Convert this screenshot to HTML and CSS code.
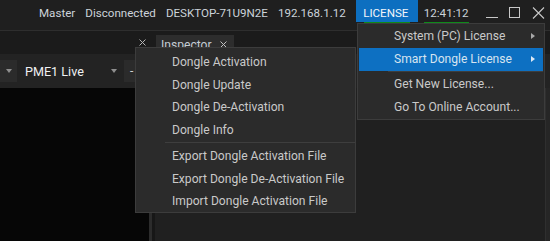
FILE: index.html
```html
<!DOCTYPE html>
<html lang="en">
<head>
    <meta charset="UTF-8">
    <title>License Menu</title>
    <link rel="stylesheet" href="styles.css">
</head>
<body>
    <div class="window">
        <header class="titlebar">
            <span class="status">Master</span>
            <span class="status">Disconnected</span>
            <span class="status">DESKTOP-71U9N2E</span>
            <span class="status">192.168.1.12</span>
            <span class="license">LICENSE</span>
            <span class="clock">12:41:12</span>
            <div class="win-controls">
                <svg class="win-btn" width="12" height="12" viewBox="0 0 12 12"><line x1="0" y1="10.5" x2="12" y2="10.5" stroke="#c8c8c8" stroke-width="1"/></svg>
                <svg class="win-btn" width="12" height="12" viewBox="0 0 12 12"><rect x="0.5" y="0.5" width="10" height="10" fill="none" stroke="#c8c8c8" stroke-width="1"/></svg>
                <svg class="win-btn" width="13" height="12" viewBox="0 0 13 12"><path d="M1 0.5 L12 11.5 M12 0.5 L1 11.5" stroke="#c8c8c8" stroke-width="1.1"/></svg>
            </div>
        </header>

        <div class="tabstrip">
            <svg class="tab-close" width="7" height="7" viewBox="0 0 7 7"><path d="M0.5 0.5 L6.5 6.5 M6.5 0.5 L0.5 6.5" stroke="#b4b4b4" stroke-width="1"/></svg>
            <div class="tab">
                <span>Inspector</span>
                <svg width="7" height="7" viewBox="0 0 7 7"><path d="M0.5 0.5 L6.5 6.5 M6.5 0.5 L0.5 6.5" stroke="#c0c0c0" stroke-width="1"/></svg>
            </div>
        </div>

        <div class="toolbar">
            <div class="drop drop-small"><span class="caret"></span></div>
            <div class="drop drop-scene">
                <span>PME1 Live</span>
                <span class="caret"></span>
            </div>
            <div class="drop drop-minus">-</div>
        </div>

        <div class="workspace">
            <div class="left-pane"></div>
            <div class="splitter"></div>
            <div class="right-pane"></div>
            <div class="edge"></div>
        </div>
    </div>

    <!-- LICENSE dropdown -->
    <div class="menu menu-license">
        <div class="menu-item has-sub">System (PC) License<span class="sub-arrow"></span></div>
        <div class="menu-item has-sub active">Smart Dongle License<span class="sub-arrow"></span></div>
        <div class="menu-sep"></div>
        <div class="menu-item">Get New License...</div>
        <div class="menu-item">Go To Online Account...</div>
    </div>

    <!-- Smart Dongle submenu -->
    <div class="menu menu-dongle">
        <div class="menu-item">Dongle Activation</div>
        <div class="menu-item">Dongle Update</div>
        <div class="menu-item">Dongle De-Activation</div>
        <div class="menu-item">Dongle Info</div>
        <div class="menu-sep"></div>
        <div class="menu-item">Export Dongle Activation File</div>
        <div class="menu-item">Export Dongle De-Activation File</div>
        <div class="menu-item">Import Dongle Activation File</div>
    </div>
</body>
</html>
```

FILE: styles.css
```css
* {
    margin: 0;
    padding: 0;
    box-sizing: border-box;
}

body {
    font-family: Roboto, 'Noto Sans', sans-serif;
    font-size: 12.1px;
    background: #202020;
    width: 550px;
    height: 241px;
    overflow: hidden;
    position: relative;
}

.window {
    display: flex;
    flex-direction: column;
    height: 241px;
}

/* Title bar */
.titlebar {
    height: 31px;
    background: #1f1f1f;
    border-bottom: 1px solid #2e2e2e;
    display: flex;
    align-items: flex-start;
    padding-left: 39px;
    color: #ccd3da;
    font-size: 11.6px;
    white-space: nowrap;
}

.status {
    margin-right: 10px;
    line-height: 26px;
}

.license {
    width: 62px;
    height: 22px;
    line-height: 26px;
    background: #0d6fc0;
    color: #f2f6fa;
    text-align: center;
    position: relative;
    margin-right: 6px;
    padding-right: 2px;
}

.license::after {
    content: "";
    position: absolute;
    left: 8px;
    top: 22px;
    width: 46px;
    height: 2px;
    background: #0f8a1a;
}

.clock {
    line-height: 26px;
    position: relative;
}

.clock::after {
    content: "";
    position: absolute;
    left: 0;
    top: 22px;
    width: 45px;
    height: 2px;
    background: #0f8a1a;
}

.win-controls {
    display: flex;
    gap: 11px;
    margin-left: auto;
    margin-right: 5px;
    padding-top: 7px;
}

/* Tab strip */
.tabstrip {
    height: 23px;
    background: #1b1b1b;
    display: flex;
    align-items: flex-end;
    padding-left: 139px;
}

.tab-close {
    margin-bottom: 8px;
    margin-right: 10px;
}

.tab {
    height: 19px;
    width: 78px;
    background: #2d2d2d;
    color: #c4ccd4;
    display: flex;
    align-items: center;
    padding-left: 5px;
    gap: 8px;
}

/* Toolbar */
.toolbar {
    height: 34px;
    background: #232323;
    display: flex;
    align-items: center;
}

.drop {
    height: 22px;
    display: flex;
    align-items: center;
}

.drop-small {
    width: 17px;
    background: #2b2b2b;
    padding-left: 6px;
}

.drop-scene {
    width: 107px;
    padding-left: 8px;
    color: #eef0f2;
    font-size: 12.6px;
    justify-content: space-between;
    padding-right: 7px;
}

.drop-minus {
    width: 30px;
    background: #2b2b2b;
    color: #cfcfcf;
    padding-left: 6px;
}

.caret {
    width: 0;
    height: 0;
    border-left: 3.5px solid transparent;
    border-right: 3.5px solid transparent;
    border-top: 4px solid #8e8e8e;
}

/* Workspace */
.workspace {
    flex: 1;
    display: flex;
}

.left-pane {
    width: 149px;
    background: #060606;
}

.splitter {
    width: 3px;
    background: #2c2c2c;
    border-right: 3px solid #171717;
    box-sizing: content-box;
}

.right-pane {
    flex: 1;
    background: #202020;
}

.edge {
    width: 5px;
    background: #262626;
    border-left: 1px solid #2f2f2f;
}

/* Menus */
.menu {
    position: absolute;
    background: #2b2b2b;
    border: 1px solid #3c3c3c;
    color: #c9c9c9;
}

.menu-item {
    position: relative;
    white-space: nowrap;
}

.menu-sep {
    height: 1px;
    background: #3e3e3e;
    margin: 1px 0 2px 29px;
}

.menu-license {
    left: 357px;
    top: 23px;
    width: 188px;
    height: 97px;
    padding: 1px 1px 0;
}

.menu-license .menu-item {
    height: 23px;
    line-height: 23px;
    padding-left: 35px;
}

.menu-license .menu-sep {
    margin: 0 0 1px 29px;
}

.menu-license .menu-sep + .menu-item {
    margin-top: 1px;
}

.menu-item.active {
    background: #0d70c2;
    color: #d6e4f0;
}

.sub-arrow {
    position: absolute;
    right: 8px;
    top: 8px;
    width: 0;
    height: 0;
    border-top: 3.5px solid transparent;
    border-bottom: 3.5px solid transparent;
    border-left: 4px solid #a8a8a8;
}

.active .sub-arrow {
    border-left-color: #dce8f4;
}

.menu-dongle {
    left: 135px;
    top: 47px;
    width: 221px;
    height: 166px;
    padding-top: 3px;
}

.menu-dongle .menu-item {
    height: 22.5px;
    line-height: 22.5px;
    padding-left: 36px;
}
```
